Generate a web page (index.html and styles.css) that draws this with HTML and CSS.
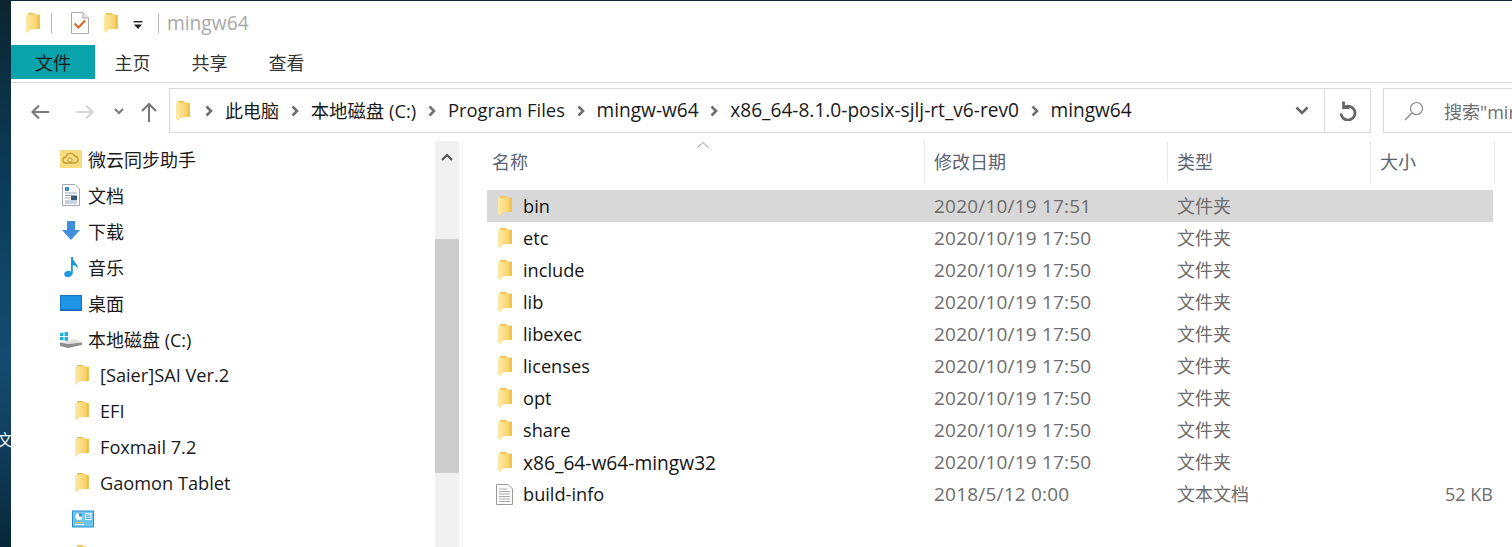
FILE: index.html
```html
<!DOCTYPE html>
<html lang="zh-CN">
<head>
  <meta charset="UTF-8" />
  <title>mingw64</title>
  <link rel="stylesheet" href="styles.css">
</head>
<body>
  <!-- shared icons -->
  <svg class="defs" width="0" height="0" aria-hidden="true">
    <defs>
      <linearGradient id="folderFront" x1="0" x2="1" y1="0" y2="0">
        <stop offset="0" stop-color="#fdeaa6" />
        <stop offset="0.55" stop-color="#fbdc84" />
        <stop offset="1" stop-color="#f8d063" />
      </linearGradient>
      <symbol id="folder" viewBox="0 0 14 20">
        <path d="M2 0 H8 L9 2 H14 V16 H3 Z" fill="#eec24f" />
        <path d="M0 2 L11.500 1 V15.500 L3 17 V20 L0 18 Z" fill="url(#folderFront)" />
      </symbol>
      <symbol id="chevron" viewBox="0 0 8 12">
        <path d="M1.500 1.500 L6 6 L1.500 10.500" fill="none" stroke="#707070" stroke-width="2.600" />
      </symbol>
    </defs>
  </svg>

  <div class="page">
    <div class="wallpaper"><span class="wallpaper-char">文</span></div>

    <div class="window">
      <!-- Title bar -->
      <div class="titlebar">
        <svg class="icon-folder"><use href="#folder" /></svg>
        <span class="tb-sep"></span>
        <svg class="icon-check" viewBox="0 0 18 22">
          <path d="M.5.5 H12 L17.5 6 V21.5 H.5 Z" fill="#fff" stroke="#a8a8a8" />
          <path d="M12 .5 V6 H17.5" fill="#eee" stroke="#a8a8a8" />
          <path d="M3.5 11.5 L7.5 15.5 L14 8.5" fill="none" stroke="#d9622b" stroke-width="2" />
        </svg>
        <svg class="icon-folder"><use href="#folder" /></svg>
        <svg class="icon-drop" viewBox="0 0 10 10">
          <rect x="0.5" y="1" width="9" height="1.4" fill="#222" />
          <path d="M1 4.5 H9 L5 9 Z" fill="#222" />
        </svg>
        <span class="tb-sep"></span>
        <span class="tb-title">mingw64</span>
      </div>

      <!-- Ribbon tabs -->
      <div class="tabs">
        <div class="tab tab-file">文件</div>
        <div class="tab">主页</div>
        <div class="tab">共享</div>
        <div class="tab">查看</div>
      </div>

      <!-- Address row -->
      <div class="addressrow">
        <div class="navbtns">
          <svg class="nav-back" viewBox="0 0 20 16"><path d="M19 8 H3 M9 1.5 L2.5 8 L9 14.5" fill="none" stroke="#7a7a7a" stroke-width="2.2" /></svg>
          <svg class="nav-forward" viewBox="0 0 20 16"><path d="M1 8 H17 M11 1.5 L17.5 8 L11 14.5" fill="none" stroke="#d6d6d6" stroke-width="2.2" /></svg>
          <svg class="nav-recent" viewBox="0 0 10 7"><path d="M1 1 L5 5 L9 1" fill="none" stroke="#777" stroke-width="2" /></svg>
          <svg class="nav-up" viewBox="0 0 16 20"><path d="M8 20 V2 M1 9 L8 2 L15 9" fill="none" stroke="#777" stroke-width="2" /></svg>
        </div>
        <div class="addressbox">
          <div class="crumbs">
            <svg class="icon-folder"><use href="#folder" /></svg>
            <svg class="chev"><use href="#chevron" /></svg>
            <span>此电脑</span>
            <svg class="chev"><use href="#chevron" /></svg>
            <span class="crumb-text">本地磁盘 (C:)</span>
            <svg class="chev"><use href="#chevron" /></svg>
            <span class="crumb-text">Program Files</span>
            <svg class="chev"><use href="#chevron" /></svg>
            <span class="crumb-num">mingw-w64</span>
            <svg class="chev"><use href="#chevron" /></svg>
            <span class="crumb-num">x86_64-8.1.0-posix-sjlj-rt_v6-rev0</span>
            <svg class="chev"><use href="#chevron" /></svg>
            <span class="crumb-num">mingw64</span>
          </div>
          <svg class="addr-drop" viewBox="0 0 14 9"><path d="M1.5 1.5 L7 7 L12.5 1.5" fill="none" stroke="#666" stroke-width="2.6" /></svg>
          <div class="refresh">
            <svg viewBox="0 0 18 20"><path d="M5.500 6 A7 7 0 1 1 2 12.500 M4.500 .5 V6.500 H10.500" fill="none" stroke="#666" stroke-width="2.800" /></svg>
          </div>
        </div>
        <div class="searchbox">
          <svg viewBox="0 0 20 20"><circle cx="12.5" cy="7.5" r="6" fill="none" stroke="#888" stroke-width="1.2" /><path d="M8 12 L1 19" stroke="#888" stroke-width="1.2" /></svg>
          <span>搜索"mingw64"</span>
        </div>
      </div>

      <!-- Main area -->
      <div class="main">
        <div class="navpane">
          <div class="navrow">
            <svg class="navicon" viewBox="0 0 22 18"><rect width="22" height="18" fill="#f7dc80" /><path d="M6 13 a3 3 0 0 1 0-6 a4.5 4.5 0 0 1 8.500-1 a3.600 3.600 0 0 1 1 7 Z" fill="none" stroke="#c79a32" stroke-width="1.300" /><circle cx="10" cy="10" r="2.200" fill="none" stroke="#c79a32" /></svg>
            <span>微云同步助手</span>
          </div>
          <div class="navrow">
            <svg class="navicon" viewBox="0 0 22 22"><path d="M2.500.5 H15 L19.500 5 V21.500 H2.500 Z" fill="#fff" stroke="#a0a8b0" /><path d="M5 3 H9 V7 H5 Z" fill="#3d8fc9" /><path d="M5 9 H17 M5 11.500 H17 M5 17 H17 M5 19 H17" stroke="#8fa9bd" /><rect x="11" y="12" width="6" height="4" fill="#38566e" /><path d="M5 14 H10" stroke="#8fa9bd" /></svg>
            <span>文档</span>
          </div>
          <div class="navrow">
            <svg class="navicon" viewBox="0 0 22 22"><path d="M7 1 H15 V10 H20 L11 20 L2 10 H7 Z" fill="#3f8fdc" /></svg>
            <span>下载</span>
          </div>
          <div class="navrow">
            <svg class="navicon" viewBox="0 0 22 24"><path d="M11 1 H13 C13 7 20 8 18 15 C17.500 11 15 10 13 10 V18 C13 21 10.500 23 7.500 23 C5 23 3.500 21.500 3.500 19.800 C3.500 17.500 6 16 8.500 16 C9.500 16 10.500 16.300 11 16.800 Z" fill="#1f9ce0" /></svg>
            <span>音乐</span>
          </div>
          <div class="navrow">
            <svg class="navicon" viewBox="0 0 22 16"><rect width="22" height="16" fill="#1f95e8" /><rect y="14.500" width="22" height="1.500" fill="#0f6db5" /><rect x=".7" y=".7" width="20.600" height="14" fill="none" stroke="#0f6db5" stroke-width=".8" /></svg>
            <span>桌面</span>
          </div>
          <div class="navrow">
            <svg class="navicon" viewBox="0 0 22 18"><path d="M0 3 L3.500 2.500 V6 H0 Z M4.500 2.300 L8 1.800 V6 H4.500 Z M0 7 H3.500 V10.500 L0 10 Z M4.500 7 H8 V11 L4.500 10.600 Z" fill="#1ab0d8" /><path d="M0 12.500 L15 9 L22 12.500 L8 14 Z" fill="#e2e2e2" /><path d="M0 12.500 L8 14 L22 12.500 V15 L8 18 L0 16 Z" fill="#8d8d8d" /></svg>
            <span>本地磁盘 (C:)</span>
          </div>
          <div class="navrow navrow-sub">
            <svg class="icon-folder"><use href="#folder" /></svg>
            <span>[Saier]SAI Ver.2</span>
          </div>
          <div class="navrow navrow-sub">
            <svg class="icon-folder"><use href="#folder" /></svg>
            <span>EFI</span>
          </div>
          <div class="navrow navrow-sub">
            <svg class="icon-folder"><use href="#folder" /></svg>
            <span>Foxmail 7.2</span>
          </div>
          <div class="navrow navrow-sub">
            <svg class="icon-folder"><use href="#folder" /></svg>
            <span>Gaomon Tablet</span>
          </div>
          <div class="navrow navrow-app">
            <svg class="navicon" viewBox="0 0 22 17"><rect x=".5" y=".5" width="21" height="16" fill="#6cc4f0" stroke="#2d8fd0" /><circle cx="7" cy="6" r="3.500" fill="#fff" /><path d="M7 6 V2.500 A3.500 3.500 0 0 1 10.500 6 Z" fill="#2d8fd0" /><rect x="13" y="2.500" width="6.500" height="7" fill="#e6f5fc" /><path d="M14 4.500 H18.500 M14 6.300 H18.500 M14 8 H18.500" stroke="#2d8fd0" stroke-width=".8" /><path d="M3 12 H12" stroke="#e3b25a" stroke-width="1.200" /><path d="M3 14 H12" stroke="#e6f5fc" stroke-width="1.200" /></svg>
          </div>
          <div class="navrow navrow-sub">
            <svg class="icon-folder"><use href="#folder" /></svg>
          </div>
        </div>

        <div class="scrollbar">
          <svg class="scroll-up" viewBox="0 0 12 8"><path d="M1 7 L6 2 L11 7" fill="none" stroke="#555" stroke-width="2.200" /></svg>
          <div class="scroll-thumb"></div>
        </div>

        <div class="filepane">
          <div class="listhead">
            <svg class="sort-caret" viewBox="0 0 12 6"><path d="M.5 5.500 L6 .5 L11.500 5.500" fill="none" stroke="#999" /></svg>
            <div class="col">名称</div>
            <div class="col">修改日期</div>
            <div class="col">类型</div>
            <div class="col">大小</div>
          </div>
          <div class="filelist">
            <div class="file selected"><svg class="icon-folder"><use href="#folder" /></svg><span class="fname">bin</span><span class="fdate">2020/10/19 17:51</span><span class="fmeta">文件夹</span><span></span></div>
            <div class="file"><svg class="icon-folder"><use href="#folder" /></svg><span class="fname">etc</span><span class="fdate">2020/10/19 17:50</span><span class="fmeta">文件夹</span><span></span></div>
            <div class="file"><svg class="icon-folder"><use href="#folder" /></svg><span class="fname">include</span><span class="fdate">2020/10/19 17:50</span><span class="fmeta">文件夹</span><span></span></div>
            <div class="file"><svg class="icon-folder"><use href="#folder" /></svg><span class="fname">lib</span><span class="fdate">2020/10/19 17:50</span><span class="fmeta">文件夹</span><span></span></div>
            <div class="file"><svg class="icon-folder"><use href="#folder" /></svg><span class="fname">libexec</span><span class="fdate">2020/10/19 17:50</span><span class="fmeta">文件夹</span><span></span></div>
            <div class="file"><svg class="icon-folder"><use href="#folder" /></svg><span class="fname">licenses</span><span class="fdate">2020/10/19 17:50</span><span class="fmeta">文件夹</span><span></span></div>
            <div class="file"><svg class="icon-folder"><use href="#folder" /></svg><span class="fname">opt</span><span class="fdate">2020/10/19 17:50</span><span class="fmeta">文件夹</span><span></span></div>
            <div class="file"><svg class="icon-folder"><use href="#folder" /></svg><span class="fname">share</span><span class="fdate">2020/10/19 17:50</span><span class="fmeta">文件夹</span><span></span></div>
            <div class="file"><svg class="icon-folder"><use href="#folder" /></svg><span class="fname fname-num">x86_64-w64-mingw32</span><span class="fdate">2020/10/19 17:50</span><span class="fmeta">文件夹</span><span></span></div>
            <div class="file">
              <svg class="icon-text" viewBox="0 0 17 21"><path d="M.5.5 H12 L16.500 5 V20.500 H.5 Z" fill="#fff" stroke="#999" /><path d="M3 5 H11 M3 7.500 H14 M3 10 H14 M3 12.500 H14 M3 15 H14 M3 17.500 H14" stroke="#aaa" /></svg>
              <span class="fname">build-info</span><span class="fdate">2018/5/12 0:00</span><span class="fmeta">文本文档</span><span class="fsize">52 KB</span>
            </div>
          </div>
        </div>
      </div>
    </div>
  </div>
</body>
</html>
```

FILE: styles.css
```css
/* Colours and type */
:root {
  --text: #1a1a1a;
  --text-meta: #6d6d6d;
  --text-head: #5b6470;
  --line: #d9d9d9;
  --accent: #08a3ab;
}

* {
  box-sizing: border-box;
}
body {
  margin: 0;
  height: 547px;
  overflow: hidden;
  font-family: "Open Sans", "Noto Sans CJK SC", sans-serif;
  font-size: 18px;
  color: var(--text);
  background-color: #0c2a3c;
}
.defs {
  position: absolute;
}
svg {
  flex: none;
  display: block;
}
.page {
  display: flex;
  height: 547px;
}

/* Strip of desktop on the left */
.wallpaper {
  position: relative;
  width: 11px;
  flex: none;
  overflow: hidden;
  background: linear-gradient(180deg, #0d2530 0%, #0a3a55 30%, #134c70 65%, #123f5e 80%, #07283a 100%);
}
.wallpaper-char {
  position: absolute;
  left: -3px;
  top: 427px;
  color: #e8eef2;
  font-size: 16px;
}

.window {
  flex: 1;
  min-width: 0;
  display: flex;
  flex-direction: column;
  margin-top: 1px;
  background-color: #fff;
  overflow: hidden;
}

/* Title bar */
.titlebar {
  height: 44px;
  flex: none;
  display: flex;
  align-items: center;
  padding-left: 15px;
}
.icon-folder {
  width: 14px;
  height: 20px;
}
.tb-sep {
  width: 1px;
  height: 20px;
  background-color: #b5b5b5;
  margin-left: 11px;
}
.icon-check {
  width: 18px;
  height: 22px;
  margin: 0 15px 0 19px;
}
.icon-drop {
  width: 10px;
  height: 10px;
  margin: 3px 4px 0 15px;
}
.tb-title {
  margin-left: 8px;
  margin-bottom: 2px;
  color: #a8a8a8;
  font-size: 19.2px;
}

/* Ribbon tabs */
.tabs {
  height: 38px;
  flex: none;
  display: flex;
  align-items: flex-start;
  border-bottom: 1px solid var(--line);
}
.tab {
  height: 34px;
  line-height: 36px;
  padding: 0 20.5px;
  color: #333;
}
.tab-file {
  width: 84px;
  margin-right: -1px;
  padding: 0;
  text-align: center;
  background-color: var(--accent);
  color: #1a1a1a;
}

/* Address row */
.addressrow {
  height: 58px;
  flex: none;
  display: flex;
  padding-top: 5px;
  padding-bottom: 8px;
}
.navbtns {
  width: 158px;
  flex: none;
  display: flex;
  align-items: center;
  padding-top: 2px;
}
.nav-back {
  width: 20px;
  height: 16px;
  margin-left: 19px;
}
.nav-forward {
  width: 20px;
  height: 16px;
  margin-left: 25px;
}
.nav-recent {
  width: 10px;
  height: 7px;
  margin-left: 19px;
}
.nav-up {
  width: 16px;
  height: 20px;
  margin-left: 17px;
}
.addressbox {
  width: 1202px;
  flex: none;
  display: flex;
  align-items: center;
  border: 1px solid var(--line);
}
.crumbs {
  flex: 1;
  display: flex;
  align-items: center;
  gap: 10.8px;
  padding-left: 6px;
  white-space: nowrap;
}
.crumbs span {
  margin-bottom: 2px;
}
.crumbs .icon-folder {
  margin-right: 3.5px;
}
.crumb-text {
  font-size: 18.4px;
}
.crumb-num {
  font-size: 19.100px;
}
.chev {
  width: 8px;
  height: 12px;
  margin: 0 1px;
}
.addr-drop {
  width: 14px;
  height: 9px;
  margin-right: 15px;
}
.refresh {
  width: 46px;
  height: 100%;
  flex: none;
  display: flex;
  align-items: center;
  justify-content: center;
  border-left: 1px solid var(--line);
}
.refresh svg {
  width: 18px;
  height: 20px;
}
.searchbox {
  flex: 1;
  min-width: 0;
  margin-left: 12px;
  display: flex;
  align-items: center;
  gap: 20px;
  padding-left: 20px;
  border: 1px solid var(--line);
  border-right: 0;
  color: #6e6e6e;
  white-space: nowrap;
  overflow: hidden;
}
.searchbox svg {
  width: 20px;
  height: 20px;
}

/* Main area */
.main {
  flex: 1;
  min-height: 0;
  display: flex;
}
.navpane {
  width: 424px;
  flex: none;
  overflow: hidden;
}
.navrow {
  height: 36px;
  display: flex;
  align-items: center;
  gap: 6px;
  padding-left: 49px;
  white-space: nowrap;
}
.navrow span {
  margin-bottom: 1px;
}
.navrow-sub {
  padding-left: 64px;
  gap: 11px;
  font-size: 18.2px;
}
.navrow-sub span {
  margin-bottom: 0;
}
.navrow-app {
  padding-left: 61px;
}
.navicon {
  width: 22px;
  height: 22px;
}

.scrollbar {
  position: relative;
  width: 24px;
  flex: none;
  background-color: #f0f0f0;
}
.scroll-up {
  position: absolute;
  left: 6px;
  top: 12px;
  width: 12px;
  height: 8px;
}
.scroll-thumb {
  position: absolute;
  left: 0;
  right: 0;
  top: 98px;
  height: 234px;
  background-color: #cdcdcd;
}

.filepane {
  flex: 1;
  min-width: 0;
  margin-left: 3px;
  border-left: 1px solid #f2f2f2;
}
.listhead {
  position: relative;
  height: 40px;
  display: grid;
  grid-template-columns: 438px 243px 203px 124px;
  padding-left: 24px;
}
.col {
  padding-left: 5px;
  line-height: 42px;
  color: var(--text-head);
  border-right: 1px solid #e8e8e8;
}
.listhead .col:nth-of-type(n+2) {
  padding-left: 9px;
}
.sort-caret {
  position: absolute;
  left: 234px;
  top: 1px;
  width: 12px;
  height: 6px;
}
.filelist {
  padding: 9px 0 0 24px;
}
.file {
  width: 1006px;
  height: 32px;
  display: grid;
  grid-template-columns: 36px 401px 243px 203px 123px;
  align-items: center;
  white-space: nowrap;
}
.file > svg {
  margin-left: 11px;
}
.selected {
  background-color: #d8d8d8;
}
.fname {
  font-size: 18.2px;
  color: #141414;
}
.fname-num {
  font-size: 19.200px;
}
.fdate {
  padding-left: 10px;
  font-size: 19px;
  letter-spacing: .2px;
  color: var(--text-meta);
}
.fmeta {
  padding-left: 10px;
  margin-bottom: 2px;
  color: var(--text-meta);
}
.fsize {
  text-align: right;
  color: var(--text-meta);
}
.file > .icon-text {
  width: 17px;
  height: 21px;
  margin-left: 9px;
}
```
